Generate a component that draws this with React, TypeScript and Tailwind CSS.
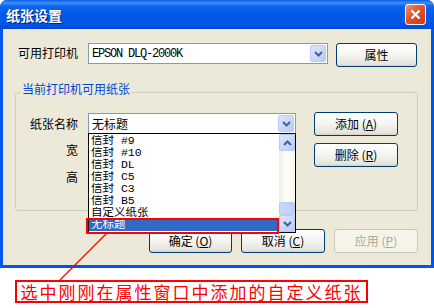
import React from "react";

const cjk = { fontFamily: '"Noto Sans CJK SC", "Liberation Sans", sans-serif' };
const mono = { fontFamily: '"Liberation Mono", "Noto Sans CJK SC", monospace' };

const Chevron: React.FC<{ up?: boolean }> = ({ up }) => (
  <svg width="9" height="6" viewBox="0 0 9 6" className="block">
    <path
      d={up ? "M1 5 L4.5 1.5 L8 5" : "M1 1 L4.5 4.5 L8 1"}
      fill="none"
      stroke="#4D6185"
      strokeWidth="2"
    />
  </svg>
);

const ArrowBox: React.FC<{ up?: boolean; className?: string }> = ({ up, className }) => (
  <div
    className={
      "flex items-center justify-center rounded-[2px] border border-[#B9CBF3] bg-[linear-gradient(135deg,#DCE6FE,#B7CBFB)] " +
      (className || "")
    }
  >
    <Chevron up={up} />
  </div>
);

const XpButton: React.FC<{ children: React.ReactNode; className?: string; disabled?: boolean }> = ({
  children,
  className,
  disabled
}) => (
  <div
    className={
      "flex items-center justify-center rounded-[3px] border text-[12px] leading-[14px] " +
      (disabled
        ? "border-[#C9C7BA] bg-[#F5F4EA] text-[#ACA899] "
        : "border-[#003C74] bg-[linear-gradient(to_bottom,#FFFFFF_0%,#F4F4F0_50%,#E6E4DA_90%,#D6D0C5_100%)] text-black ") +
      (className || "")
    }
  >
    {children}
  </div>
);

const items = ["信封 #9", "信封 #10", "信封 DL", "信封 C5", "信封 C3", "信封 B5", "自定义纸张", "无标题"];

export default function App() {
  return (
    <div className="relative w-[434px] h-[308px] bg-white overflow-hidden" style={cjk}>
      {/* Window */}
      <div className="flex flex-col h-[268px] rounded-t-[7px] bg-[#0055EA]">
        {/* Title bar */}
        <div className="flex h-[29px] items-center justify-between rounded-t-[7px] bg-[linear-gradient(to_bottom,#0A5DE8_0%,#3D90F8_10%,#0A64EC_22%,#0258E8_55%,#0055E6_85%,#0046CF_100%)] pl-[6px] pr-[8px]">
          <span className="text-[14px] font-bold leading-[16px] text-white [text-shadow:1px_1px_0_#0A1E80]">
            纸张设置
          </span>
          <div className="flex h-[21px] w-[21px] items-center justify-center rounded-[3px] border border-white bg-[linear-gradient(135deg,#F0906E,#E2532E_45%,#C93C1C)]">
            <svg width="11" height="11" viewBox="0 0 11 11">
              <path d="M1.5 1.5 L9.5 9.5 M9.5 1.5 L1.5 9.5" stroke="white" strokeWidth="2.2" />
            </svg>
          </div>
        </div>

        {/* Client area */}
        <div className="mx-[3px] mb-[3px] flex flex-1 flex-col bg-[#ECE9D8] pr-[13px]">
          {/* Printer row */}
          <div className="mt-[14px] flex items-start pl-[15px]">
            <span className="w-[70px] pt-[3px] text-[12px] leading-[14px] text-black">可用打印机</span>
            <div className="flex h-[21px] w-[240px] items-center border border-[#7F9DB9] bg-white p-[1px]">
              <span className="flex-1 pl-[2px] text-[12px] tracking-[-1.2px] text-black" style={mono}>
                EPSON DLQ-2000K
              </span>
              <ArrowBox className="h-[17px] w-[16px]" />
            </div>
            <XpButton className="ml-[8px] h-[24px] w-[81px]">属性</XpButton>
          </div>

          {/* Group box */}
          <div className="relative ml-[12px] mt-[25px] h-[119px] rounded-[3px] border border-[#D0D0BF]">
            <span className="absolute left-[5px] top-[-10px] bg-[#ECE9D8] px-[1px] text-[12px] leading-[12px] text-[#0046D5]">
              当前打印机可用纸张
            </span>
            <div className="flex items-start">
              <div className="flex flex-col pt-[20px]">
                <div className="flex h-[21px] items-center">
                  <span className="w-[72px] pr-[10px] text-right text-[12px] leading-[14px]">纸张名称</span>
                  <div className="relative h-[21px] w-[208px]">
                    <div className="flex h-full items-center border border-[#7F9DB9] bg-white p-[1px]">
                      <span className="flex-1 pl-[2px] text-[12px] leading-[14px] text-black">无标题</span>
                      <ArrowBox className="h-[17px] w-[16px]" />
                    </div>
                    {/* Open drop-down list */}
                    <div className="absolute left-0 top-[20px] z-10 flex h-[100px] w-[208px] border border-black bg-white">
                      <div className="flex flex-1 flex-col pt-[1px]">
                        {items.map((t, i) => (
                          <div
                            key={t}
                            className={
                              "h-[12px] overflow-hidden pl-[2px] text-[11.5px] leading-[12px] whitespace-pre " +
                              (i === items.length - 1 ? "bg-[#316AC5] text-white" : "text-black")
                            }
                            style={mono}
                          >
                            {t}
                          </div>
                        ))}
                      </div>
                      <div className="flex w-[16px] flex-col bg-[linear-gradient(to_right,#EEEDE5,#FEFEFB_40%,#F6F5EF)]">
                        <ArrowBox up className="h-[17px] w-[16px]" />
                        <div className="flex-1" />
                        <div className="h-[13px] w-[16px] rounded-[2px] border border-[#B9CBF3] bg-[linear-gradient(to_right,#C9D8FC,#BCCFFB)]" />
                        <ArrowBox className="h-[17px] w-[16px]" />
                      </div>
                    </div>
                  </div>
                </div>
                <div className="mt-[5px] flex h-[21px] items-center">
                  <span className="w-[72px] pr-[10px] text-right text-[12px] leading-[14px]">宽</span>
                </div>
                <div className="mt-[6px] flex h-[21px] items-center">
                  <span className="w-[72px] pr-[10px] text-right text-[12px] leading-[14px]">高</span>
                </div>
              </div>
              <div className="ml-[18px] flex flex-col gap-[7px] pt-[19px]">
                <XpButton className="h-[24px] w-[84px]">
                  添加 (<u>A</u>)
                </XpButton>
                <XpButton className="h-[24px] w-[84px]">
                  删除 (<u>R</u>)
                </XpButton>
              </div>
            </div>
          </div>

          {/* Dialog buttons */}
          <div className="mt-[18px] flex justify-end gap-[9px]">
            <XpButton className="h-[24px] w-[83px]">
              确定 (<u>O</u>)
            </XpButton>
            <XpButton className="h-[24px] w-[84px]">
              取消 (<u>C</u>)
            </XpButton>
            <XpButton disabled className="h-[24px] w-[84px]">
              应用 (<u>P</u>)
            </XpButton>
          </div>
        </div>
      </div>

      {/* Annotation caption */}
      <div className="ml-[15px] mt-[12px] flex h-[23px] w-[353px] items-center justify-center whitespace-nowrap border-2 border-[#FF0000] text-[17px] leading-[18px] tracking-[2px] text-[#FF0000]">
        选中刚刚在属性窗口中添加的自定义纸张
      </div>

      {/* Annotation highlight and pointer */}
      <div className="absolute left-[86px] top-[218px] z-20 h-[16px] w-[193px] border-2 border-[#FF0000]" />
      <svg className="absolute left-0 top-0 z-20" width="434" height="308">
        <line x1="107" y1="233" x2="60" y2="280" stroke="#FF0000" strokeWidth="1.2" />
      </svg>
    </div>
  );
}
